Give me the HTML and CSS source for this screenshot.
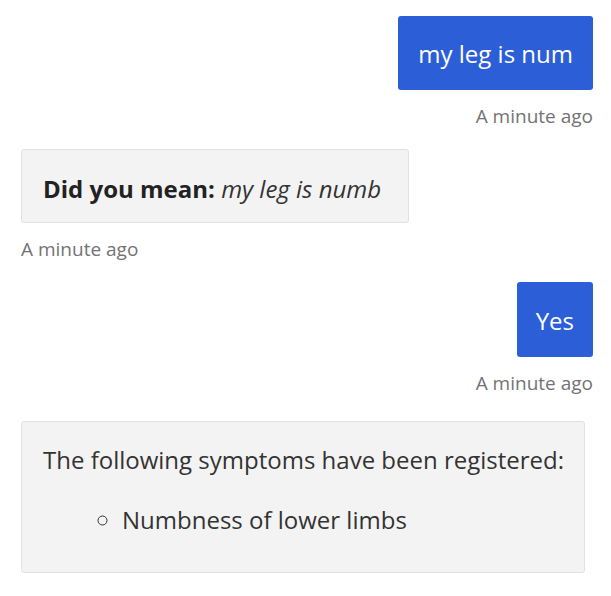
FILE: index.html
```html
<!DOCTYPE html>
<html>
<head>
<meta charset="utf-8">
<link rel="stylesheet" href="styles.css">
</head>
<body>
<div class="chat">
  <div class="msg user">
    <div class="bubble user-bubble">my leg is num</div>
    <div class="time">A minute ago</div>
  </div>
  <div class="msg bot">
    <div class="bubble bot-bubble mean"><b>Did you mean:</b> <i>my leg is numb</i></div>
    <div class="time">A minute ago</div>
  </div>
  <div class="msg user">
    <div class="bubble user-bubble yes">Yes</div>
    <div class="time">A minute ago</div>
  </div>
  <div class="msg bot wide">
    <div class="bubble bot-bubble card">
      <p class="card-title">The following symptoms have been registered:</p>
      <ul class="list">
        <li>Numbness of lower limbs</li>
      </ul>
    </div>
  </div>
</div>
</body>
</html>
```

FILE: styles.css
```css
html, body {
  margin: 0;
  padding: 0;
  background: #ffffff;
}
body {
  font-family: "Open Sans", "Noto Sans", sans-serif;
  color: #222;
}
.chat {
  display: flex;
  flex-direction: column;
  padding: 16px 18px 0 21px;
}
.msg {
  display: flex;
  flex-direction: column;
}
.msg.user {
  align-items: flex-end;
}
.msg.bot {
  align-items: flex-start;
}
.msg + .msg {
  margin-top: 20px;
}
.msg.wide {
  margin-top: 25px;
}
.bubble {
  border-radius: 3px;
  font-size: 24px;
  line-height: 32px;
}
.user-bubble {
  background: #2c5fd7;
  color: #ffffff;
  padding: 22px 20px 20px;
}
.user-bubble.yes {
  padding: 23px 19px 20px;
}
.bot-bubble {
  background: #f3f3f3;
  border: 1px solid #e1e1e1;
  color: #222;
}
.mean {
  padding: 23px 27px 17px 21px;
}
.mean b {
  font-weight: 700;
}
.mean i {
  color: #333;
}
.time {
  margin-top: 13px;
  font-size: 19px;
  line-height: 26px;
  color: #737373;
}
.msg.wide {
  align-self: stretch;
  margin-right: 8px;
}
.card {
  align-self: stretch;
  padding: 22px 21px 36px;
  color: #333;
}
.card-title {
  margin: 0;
  white-space: nowrap;
}
.list {
  margin: 28px 0 0;
  padding-left: 79px;
  list-style: circle;
}
```
